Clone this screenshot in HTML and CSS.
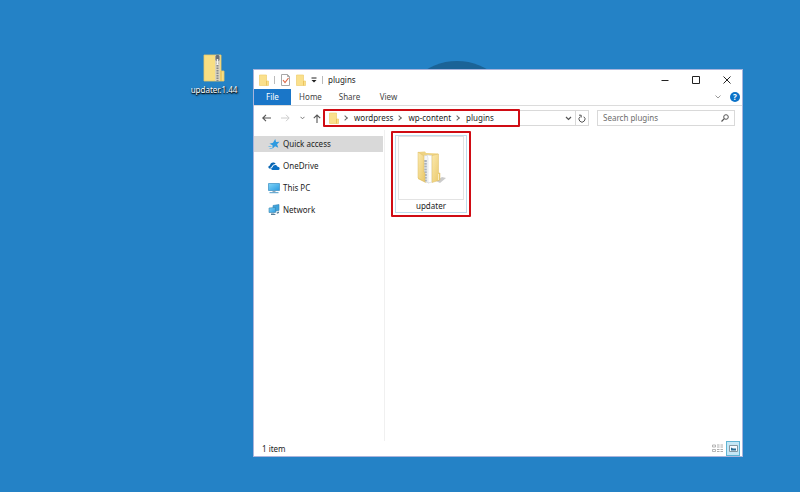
FILE: index.html
```
<!DOCTYPE html>
<html lang="en">
<head>
<meta charset="utf-8">
<title>plugins</title>
<link rel="stylesheet" href="styles.css">
</head>
<body>
<svg width="0" height="0" class="defs" aria-hidden="true">
  <defs>
    <linearGradient id="gold" x1="0" y1="0" x2="1" y2="1"><stop offset="0" stop-color="#fbe9ae"/><stop offset="1" stop-color="#e9c767"/></linearGradient>
    <linearGradient id="screen" x1="0" y1="0" x2="1" y2="1"><stop offset="0" stop-color="#7fd4f8"/><stop offset="1" stop-color="#2c9be0"/></linearGradient>
    <symbol id="folder" viewBox="0 0 10 12"><path d="M.5 1h7v6h2v4.500h-9z" fill="#fae08c"/><path d="M.5 1h7v6h2v4.500h-9z" fill="none" stroke="#efcf70" stroke-width=".7"/><path d="M7.500 7v4.500" stroke="#e7bd52" stroke-width=".8"/></symbol>
  </defs>
</svg>
<main class="desktop">
  <div class="emblem"></div>
  <div class="shortcut">
    <svg width="22" height="28" viewBox="0 0 22 28">
      <path d="M1 1h17v16h3v10H1z" fill="#f8df83"/>
      <path d="M1 1h17v16h3v10H1z" fill="none" stroke="#e8c869" stroke-width=".8"/>
      <path d="M18 17v10" stroke="#dcb64c"/>
      <path d="M12 1h5v26h-5z" fill="#d9d3bd"/>
      <path d="M14.500 1v26" stroke="#85888d" stroke-width="2" stroke-dasharray="1.500 1"/>
      <rect x="12.500" y="1" width="4" height="6" rx="1.500" fill="#697078"/>
      <path d="M14.500 5v6" stroke="#f4f4f4" stroke-width="1.500"/>
    </svg>
    <span>updater.1.44</span>
  </div>

  <section class="window">
    <header class="titlebar">
      <svg width="10" height="12"><use href="#folder"/></svg>
      <i class="sep"></i>
      <svg class="check" width="9" height="12" viewBox="0 0 9 12"><path d="M.5.500h6l2 2v9h-8z" fill="#fff" stroke="#a8a8a8"/><path d="M6.500.500v2h2" fill="none" stroke="#a8a8a8"/><path d="M2 6l2 2.500L7.500 4" fill="none" stroke="#dd6a48" stroke-width="1.200"/></svg>
      <svg width="10" height="12"><use href="#folder"/></svg>
      <svg width="6" height="6" viewBox="0 0 6 6"><path d="M.5 1h5" stroke="#222"/><path d="M.5 3h5L3 5.500z" fill="#222"/></svg>
      <i class="sep"></i>
      <h1>plugins</h1>
      <div class="controls">
        <button aria-label="Minimize"><svg width="8" height="8" viewBox="0 0 8 8"><path d="M.5 4.500h7" stroke="#222"/></svg></button>
        <button aria-label="Maximize"><svg width="8" height="8" viewBox="0 0 8 8"><path d="M.5.500h7v7h-7z" fill="none" stroke="#222"/></svg></button>
        <button aria-label="Close"><svg width="8" height="8" viewBox="0 0 8 8"><path d="M.5.500l7 7M7.500.500l-7 7" stroke="#222"/></svg></button>
      </div>
    </header>

    <nav class="ribbon">
      <button class="file">File</button>
      <button>Home</button>
      <button>Share</button>
      <button>View</button>
      <div class="ribbon-end">
        <svg width="6" height="4" viewBox="0 0 6 4"><path d="M.5.500L3 3 5.500.500" fill="none" stroke="#999"/></svg>
        <a class="help" href="#" aria-label="Help">?</a>
      </div>
    </nav>

    <div class="toolbar">
      <button aria-label="Back"><svg width="9" height="8" viewBox="0 0 9 8"><path d="M9 4H1M4 .8L.8 4 4 7.200" fill="none" stroke="#555" stroke-width="1.100"/></svg></button>
      <button aria-label="Forward"><svg width="9" height="8" viewBox="0 0 9 8"><path d="M0 4h8M5 .8L8.200 4 5 7.200" fill="none" stroke="#ccc"/></svg></button>
      <button class="recent" aria-label="Recent locations"><svg width="5" height="4" viewBox="0 0 5 4"><path d="M.5.800l2 2 2-2" fill="none" stroke="#777"/></svg></button>
      <button class="up" aria-label="Up"><svg width="8" height="9" viewBox="0 0 8 9"><path d="M4 9V1M.8 4.200L4 1l3.200 3.200" fill="none" stroke="#555" stroke-width="1.100"/></svg></button>
      <div class="address">
        <svg width="10" height="12"><use href="#folder"/></svg>
        <b class="chev"></b><a href="#">wordpress</a>
        <b class="chev"></b><a href="#">wp-content</a>
        <b class="chev"></b><a href="#">plugins</a>
        <div class="address-end">
          <button aria-label="Previous locations"><svg width="7" height="5" viewBox="0 0 7 5"><path d="M1 1l2.500 2.500L6 1" fill="none" stroke="#555" stroke-width="1.200"/></svg></button>
          <button class="refresh" aria-label="Refresh"><svg width="8" height="9" viewBox="0 0 8 9"><path d="M5.800 2.700A3 3 0 1 1 2.200 2.700M1 1.200h2.200v2.300" fill="none" stroke="#555"/></svg></button>
        </div>
        <span class="mark path-mark"></span>
      </div>
      <label class="search">
        <input type="text" placeholder="Search plugins" aria-label="Search plugins">
        <svg width="8" height="8" viewBox="0 0 8 8"><circle cx="5" cy="3" r="2.300" fill="none" stroke="#555"/><path d="M3.300 4.700L.5 7.500" stroke="#555" stroke-width="1.200"/></svg>
      </label>
    </div>

    <div class="content">
      <aside class="tree">
        <a class="selected" href="#"><svg width="12" height="12" viewBox="0 0 12 12"><path d="M7.200 1l.9 3 3.400-.2-2.400 2.400 1.200 3.500-3.200-1.400-2.700 2.500.1-3.600-3-1.500 3.500-1z" fill="#2e9ae0"/><path d="M.5 8.500h3M1.500 10.500h2.500" stroke="#62b5e8" stroke-width=".8"/></svg>Quick access</a>
        <a href="#"><svg width="12" height="12" viewBox="0 0 12 12"><path d="M1.300 8.500C-.2 7.800.3 5.600 2 5.500 2.200 2.500 6 1.500 7.700 4 5.500 4 4.300 5 4 6.500c-1.300.2-1.700 1.300-1.200 2.300z" fill="#0864b1"/><path d="M4.300 10C2.600 9.500 3 7.300 4.700 7.200 5 4.500 8.800 4.200 9.500 6.700c2.300-.2 2.900 2.700 1 3.300z" fill="#0b6fc2"/></svg>OneDrive</a>
        <a href="#"><svg width="12" height="12" viewBox="0 0 12 12"><path d="M.5 1.500h11v7H.5z" fill="url(#screen)" stroke="#4798c9" stroke-width=".8"/><path d="M4.500 9h3v1.200h-3z" fill="#94a9b7"/><path d="M1.500 10.700h9" stroke="#4c9aca"/></svg>This PC</a>
        <a href="#"><svg width="12" height="12" viewBox="0 0 12 12"><path d="M5 1.500l6-1v6l-6 1.200z" fill="#3fa3dc" stroke="#3786b6" stroke-width=".6"/><path d="M1 4l6.500-.5v5L1 8.500z" fill="url(#screen)" stroke="#3a83ad" stroke-width=".6"/><path d="M3 9.500h3l2 1.500H3zM8.500 8.500l2.500-1v1.500l-2 .8z" fill="#587f98"/></svg>Network</a>
      </aside>
      <div class="files">
        <a class="tile" href="#">
          <span class="thumb">
            <svg width="30" height="36" viewBox="0 0 30 36">
              <path d="M20 31l6-4 4 1-6 5z" fill="#b5b5b5" opacity=".7"/>
              <path d="M2 2l7-.5 1 1.500 12 .5v10L10 33l-8-4z" fill="#eed281"/>
              <path d="M7 6l6-1v28l-6-2z" fill="#f4f6f9" stroke="#cfd2d6" stroke-width=".5"/>
              <path d="M9.500 10v22" stroke="#a7b1bd" stroke-width="2.600" stroke-dasharray="2 .8"/>
              <path d="M11 5l5 .5V32l-4 1V8z" fill="#fff" stroke="#cbd0d6" stroke-width=".5"/>
              <path d="M2 2l6 4v16l1 1v9l-7-4z" fill="url(#gold)" stroke="#dfbd64" stroke-width=".5"/>
              <path d="M16 5.500L22.500 4v19h1.500v7l-8 2.500z" fill="url(#gold)" stroke="#dfbd64" stroke-width=".5"/>
              <path d="M22.500 24v6" stroke="#f9ecbf"/>
            </svg>
          </span>
          <span class="name">updater</span>
          <span class="mark tile-mark"></span>
        </a>
      </div>
    </div>

    <footer class="status">
      <span>1 item</span>
      <div class="views">
        <button aria-label="Details"><svg width="11" height="9" viewBox="0 0 11 9"><path d="M.5 1h3v2h-3zM.5 5.500h3v2h-3z" fill="none" stroke="#999" stroke-width=".7"/><path d="M5 1h6M5 3h6M5 5.500h6M5 7.500h6" stroke="#999" stroke-width=".8" stroke-dasharray="2.500 1"/></svg></button>
        <button class="active" aria-label="Large icons"><svg width="9" height="7" viewBox="0 0 9 7"><path d="M.5.500h8v6h-8z" fill="#f5fbff" stroke="#8598a3"/><path d="M2 2.500l2 1h3V5.500H2z" fill="#286c94"/></svg></button>
      </div>
    </footer>
  </section>
</main>
</body>
</html>
```
FILE: styles.css
```
* { box-sizing: border-box; }
body {
  margin: 0;
  font: 8px/12px "Noto Sans", "Open Sans", sans-serif;
  color: #1c1c1c;
}
.defs { position: absolute; }
svg { display: block; flex: none; }
a { color: inherit; text-decoration: none; }
button {
  display: flex;
  align-items: center;
  justify-content: center;
  padding: 0;
  border: 0;
  background: none;
  font: inherit;
  color: inherit;
}
.desktop {
  position: relative;
  min-height: 100vh;
  overflow: hidden;
  background: #2482c6;
}
.emblem {
  position: absolute;
  left: 398px;
  top: 61px;
  width: 118px;
  height: 118px;
  border-radius: 50%;
  background: #1b6397;
}
.shortcut {
  position: absolute;
  left: 184px;
  top: 54px;
  width: 60px;
  display: flex;
  flex-direction: column;
  align-items: center;
  gap: 2px;
  color: #fff;
  text-shadow: 0 1px 1px #000, 1px 1px 2px #000;
}
.window {
  position: absolute;
  inset: 69px 57px 35px 253px;
  display: flex;
  flex-direction: column;
  background: #fff;
  border: 1px solid #a9b4dc;
}
.titlebar {
  display: flex;
  align-items: center;
  gap: 5px;
  height: 19px;
  padding-left: 5px;
}
.titlebar h1 { margin: 0; font: inherit; }
.check { margin: 0 1px; }
.sep { width: 1px; height: 8px; background: #bbb; }
.controls { display: flex; margin-left: auto; }
.controls button { width: 31px; height: 19px; }
.ribbon {
  display: flex;
  height: 17px;
  border-bottom: 1px solid #dcdcdc;
}
.ribbon button { width: 39px; color: #444; }
.ribbon .file { width: 37px; background: #1a76c8; color: #fff; }
.ribbon-end {
  display: flex;
  align-items: center;
  gap: 9px;
  margin-left: auto;
  padding-right: 2px;
}
.help {
  width: 10px;
  height: 10px;
  border-radius: 50%;
  background: #0b72c8;
  color: #fff;
  font-weight: 700;
  line-height: 10px;
  text-align: center;
}
.toolbar {
  display: flex;
  align-items: center;
  height: 24px;
  padding: 0 7px;
}
.toolbar > button { width: 10px; margin-right: 9px; }
.toolbar > .recent { width: 6px; margin-right: 8px; }
.toolbar > .up { width: 8px; margin-right: 3px; }
.address {
  position: relative;
  flex: 1;
  display: flex;
  align-items: center;
  height: 16px;
  padding-left: 4px;
  border: 1px solid #d9d9d9;
}
.chev {
  width: 4px;
  height: 4px;
  margin: 0 7px 0 4px;
  border: solid #666;
  border-width: 1px 1px 0 0;
  transform: rotate(45deg);
}
.address-end { display: flex; align-self: stretch; margin-left: auto; }
.address-end button { width: 13px; }
.address-end .refresh { border-left: 1px solid #d9d9d9; }
.mark {
  position: absolute;
  border: 2px solid #d00c14;
  border-radius: 1px;
}
.path-mark { left: -2px; top: -2px; width: 197px; height: 18px; }
.search {
  display: flex;
  align-items: center;
  width: 138px;
  height: 16px;
  margin-left: 8px;
  padding: 0 5px;
  border: 1px solid #d9d9d9;
}
.search input {
  flex: 1;
  min-width: 0;
  padding: 0;
  border: 0;
  outline: 0;
  background: none;
  font: inherit;
}
.search input::placeholder { color: #6d6d6d; opacity: 1; }
.content { flex: 1; display: flex; }
.tree {
  display: flex;
  flex-direction: column;
  gap: 6px;
  width: 131px;
  padding: 6px 1px 0 0;
  border-right: 1px solid #f0f0f0;
}
.tree a {
  display: flex;
  align-items: center;
  gap: 3px;
  height: 16px;
  padding-left: 14px;
}
.tree .selected { background: #d9d9d9; }
.files { flex: 1; padding: 5px 10px; }
.tile {
  position: relative;
  display: flex;
  flex-direction: column;
  width: 72px;
  height: 78px;
  padding: 0 2px;
  border: 1px solid #bfdcec;
}
.thumb {
  display: flex;
  align-items: center;
  justify-content: center;
  height: 65px;
  border: 1px solid #e3e3e3;
}
.name { text-align: center; }
.tile-mark { inset: -5px; }
.status {
  display: flex;
  align-items: center;
  justify-content: space-between;
  height: 15px;
  padding: 0 2px 0 8px;
}
.views { display: flex; gap: 2px; }
.views button { width: 14px; height: 15px; }
.views .active { background: #c4e7f6; border: 1px solid #5fb4d4; }
```
